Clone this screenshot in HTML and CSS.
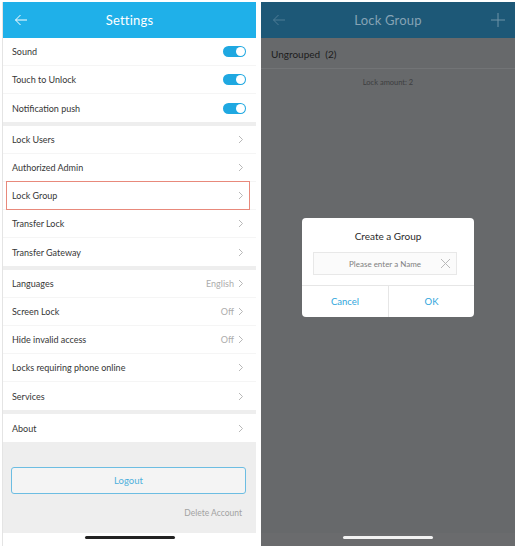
FILE: index.html
```html
<!DOCTYPE html>
<html>
<head>
<meta charset="utf-8">
<link rel="stylesheet" href="styles.css">
</head>
<body>
<div class="shots">
  <div class="phone settings">
    <header class="nav nav-blue">
      <svg class="nav-back" width="14" height="12" viewBox="0 0 14 12"><path d="M13 6H1.5M6.5 1L1.5 6l5 5" fill="none" stroke="#fff" stroke-width="1"/></svg>
      <h1 class="nav-title">Settings</h1>
    </header>

    <section class="group">
      <div class="row"><span class="label">Sound</span><span class="toggle"></span></div>
      <div class="row"><span class="label">Touch to Unlock</span><span class="toggle"></span></div>
      <div class="row"><span class="label">Notification push</span><span class="toggle"></span></div>
    </section>

    <section class="group">
      <div class="row"><span class="label">Lock Users</span><svg class="chev" width="6" height="9" viewBox="0 0 6 9"><path d="M1 1l3.5 3.5L1 8" fill="none" stroke="#b8b8b8" stroke-width="1"/></svg></div>
      <div class="row"><span class="label">Authorized Admin</span><svg class="chev" width="6" height="9" viewBox="0 0 6 9"><path d="M1 1l3.5 3.5L1 8" fill="none" stroke="#b8b8b8" stroke-width="1"/></svg></div>
      <div class="row row-marked"><span class="label">Lock Group</span><svg class="chev" width="6" height="9" viewBox="0 0 6 9"><path d="M1 1l3.5 3.5L1 8" fill="none" stroke="#b8b8b8" stroke-width="1"/></svg></div>
      <div class="row"><span class="label">Transfer Lock</span><svg class="chev" width="6" height="9" viewBox="0 0 6 9"><path d="M1 1l3.5 3.5L1 8" fill="none" stroke="#b8b8b8" stroke-width="1"/></svg></div>
      <div class="row"><span class="label">Transfer Gateway</span><svg class="chev" width="6" height="9" viewBox="0 0 6 9"><path d="M1 1l3.5 3.5L1 8" fill="none" stroke="#b8b8b8" stroke-width="1"/></svg></div>
    </section>

    <section class="group">
      <div class="row"><span class="label">Languages</span><span class="value">English</span><svg class="chev" width="6" height="9" viewBox="0 0 6 9"><path d="M1 1l3.5 3.5L1 8" fill="none" stroke="#b8b8b8" stroke-width="1"/></svg></div>
      <div class="row"><span class="label">Screen Lock</span><span class="value">Off</span><svg class="chev" width="6" height="9" viewBox="0 0 6 9"><path d="M1 1l3.5 3.5L1 8" fill="none" stroke="#b8b8b8" stroke-width="1"/></svg></div>
      <div class="row"><span class="label">Hide invalid access</span><span class="value">Off</span><svg class="chev" width="6" height="9" viewBox="0 0 6 9"><path d="M1 1l3.5 3.5L1 8" fill="none" stroke="#b8b8b8" stroke-width="1"/></svg></div>
      <div class="row"><span class="label">Locks requiring phone online</span><svg class="chev" width="6" height="9" viewBox="0 0 6 9"><path d="M1 1l3.5 3.5L1 8" fill="none" stroke="#b8b8b8" stroke-width="1"/></svg></div>
      <div class="row"><span class="label">Services</span><svg class="chev" width="6" height="9" viewBox="0 0 6 9"><path d="M1 1l3.5 3.5L1 8" fill="none" stroke="#b8b8b8" stroke-width="1"/></svg></div>
    </section>

    <section class="group">
      <div class="row"><span class="label">About</span><svg class="chev" width="6" height="9" viewBox="0 0 6 9"><path d="M1 1l3.5 3.5L1 8" fill="none" stroke="#b8b8b8" stroke-width="1"/></svg></div>
    </section>

    <div class="footer">
      <button class="logout">Logout</button>
      <div class="delete">Delete Account</div>
    </div>
    <div class="home home-light"><span class="home-bar"></span></div>
  </div>

  <div class="phone groups">
    <header class="nav nav-dim">
      <svg class="nav-back" width="14" height="12" viewBox="0 0 14 12"><path d="M13 6H1.5M6.5 1L1.5 6l5 5" fill="none" stroke="#4e7c96" stroke-width="1"/></svg>
      <h1 class="nav-title">Lock Group</h1>
      <svg class="nav-plus" width="14" height="14" viewBox="0 0 14 14"><path d="M7 0v14M0 7h14" fill="none" stroke="#6f93a8" stroke-width="1"/></svg>
    </header>
    <div class="groups-body">
      <div class="group-head">Ungrouped&nbsp;&nbsp;(2)</div>
      <div class="group-count">Lock amount: 2</div>
    </div>
    <div class="home home-dark"><span class="home-bar"></span></div>

    <div class="dialog">
      <div class="dialog-title">Create a Group</div>
      <div class="dialog-input">
        <span class="placeholder">Please enter a Name</span>
        <svg class="clear" width="11" height="11" viewBox="0 0 11 11"><path d="M1 1l9 9M10 1l-9 9" fill="none" stroke="#b9b9b9" stroke-width="1"/></svg>
      </div>
      <div class="dialog-actions">
        <span class="dialog-btn">Cancel</span>
        <span class="dialog-btn">OK</span>
      </div>
    </div>
  </div>
</div>
</body>
</html>
```

FILE: styles.css
```css
* { box-sizing: border-box; }
html, body { margin: 0; padding: 0; }
body {
  width: 519px;
  height: 546px;
  background: #fff;
  font-family: Lato, "Open Sans", sans-serif;
  overflow: hidden;
}
.shots {
  display: flex;
  gap: 5px;
  padding: 2px 0 0 2px;
}
.phone {
  width: 254px;
  height: 544px;
  display: flex;
  flex-direction: column;
  position: relative;
}
.settings { background: #eeeeee; border-left: 1px solid #e4e4e4; }
.groups { background: #67696b; }

.nav {
  height: 36px;
  flex: none;
  display: flex;
  align-items: center;
  justify-content: center;
  position: relative;
}
.nav-blue { background: #1fb0e9; }
.nav-dim { background: #1d5877; }
.nav-title {
  margin: 0;
  font-size: 13px;
  font-weight: 400;
  color: #fff;
  letter-spacing: 0.2px;
}
.nav-dim .nav-title { color: #86a3b5; }
.nav-back { position: absolute; left: 11px; top: 12px; }
.nav-plus { position: absolute; right: 10px; top: 11px; }

.group {
  background: #fff;
  margin-bottom: 4px;
}
.row {
  height: 28px;
  display: flex;
  align-items: center;
  padding: 0 12px 0 9px;
  font-size: 9px;
  color: #363636;
  position: relative;
  border-bottom: 1px solid #f5f5f5;
}
.row:last-child { border-bottom: none; }
.label { flex: 1; }
.value { color: #acacac; margin-right: 4px; }
.chev { flex: none; }
.row-marked::after {
  content: "";
  position: absolute;
  top: -1px;
  bottom: -1px;
  left: 3px;
  right: 6px;
  border: 1px solid #e8897b;
}
.toggle {
  width: 23px;
  height: 11px;
  border-radius: 6px;
  background: #1fa8e1;
  position: relative;
  margin-right: -2px;
}
.toggle::after {
  content: "";
  position: absolute;
  right: 1px;
  top: 1px;
  width: 9px;
  height: 9px;
  border-radius: 50%;
  background: #fff;
}

.footer {
  flex: 1;
  display: flex;
  flex-direction: column;
  padding: 21px 10px 0 8px;
}
.logout {
  height: 27px;
  border: 1px solid #6cbde2;
  border-radius: 3px;
  background: #f4f4f4;
  color: #4eb0dc;
  font-family: inherit;
  font-size: 9.5px;
}
.delete {
  text-align: right;
  margin-top: 14px;
  padding-right: 4px;
  font-size: 8.5px;
  color: #a2a2a2;
}
.home {
  height: 13px;
  flex: none;
  display: flex;
  justify-content: center;
  padding-top: 3px;
}
.home-light { background: #fff; }
.home-dark { background: #6a6b6d; }
.home-bar {
  width: 90px;
  height: 3px;
  border-radius: 2px;
  background: #222;
}
.home-dark .home-bar { background: #f2f2f2; }

.groups-body { flex: 1; }
.group-head {
  height: 31px;
  display: flex;
  align-items: center;
  padding: 2px 10px 0;
  font-size: 10px;
  color: #1c1c1c;
  border-bottom: 1px solid #727476;
}
.group-count {
  text-align: center;
  font-size: 7.5px;
  color: #3d3e40;
  margin-top: 9px;
}

.dialog {
  position: absolute;
  left: 41px;
  top: 216px;
  width: 172px;
  height: 99px;
  background: #fff;
  border-radius: 4px;
  display: flex;
  flex-direction: column;
}
.dialog-title {
  text-align: center;
  font-size: 10px;
  color: #2b2b2b;
  padding-top: 12px;
  height: 34px;
}
.dialog-input {
  margin: 0 17px 0 11px;
  height: 23px;
  border: 1px solid #e8e8e8;
  background: #fbfbfb;
  display: flex;
  align-items: center;
  justify-content: center;
  position: relative;
}
.placeholder { font-size: 8px; color: #808080; }
.clear { position: absolute; right: 5px; top: 5px; }
.dialog-actions {
  margin-top: 10px;
  flex: 1;
  display: grid;
  grid-template-columns: 1fr 1fr;
  border-top: 1px solid #e6e6e6;
}
.dialog-btn {
  display: flex;
  align-items: center;
  justify-content: center;
  font-size: 9.5px;
  color: #2fa6dc;
}
.dialog-btn + .dialog-btn { border-left: 1px solid #e6e6e6; }
```
